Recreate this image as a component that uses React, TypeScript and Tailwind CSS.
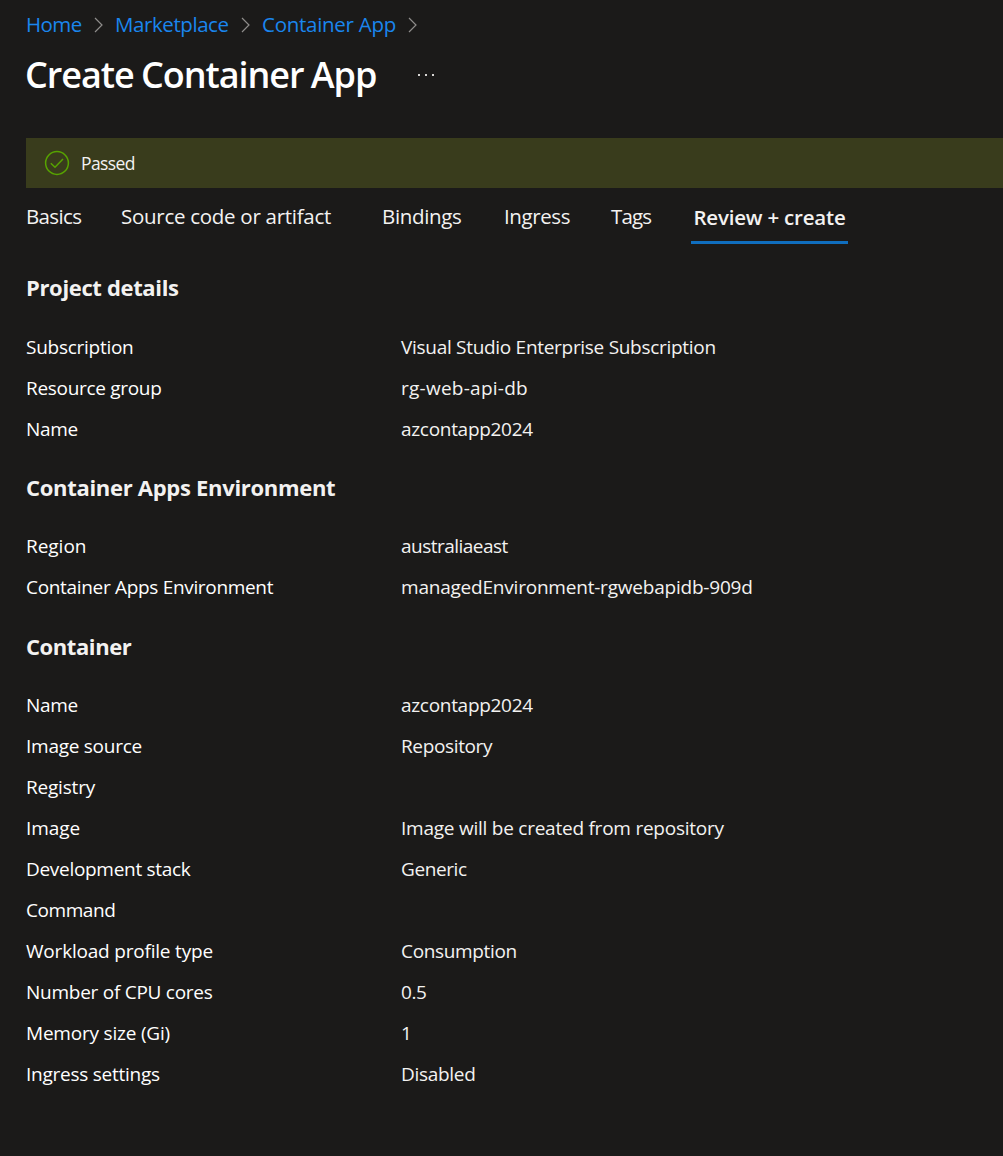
type Item = { text: string; cls: string };
type Row = { label: Item; value?: Item };
type Section = { title: Item; rows: Row[] };

const sections: Section[] = [
  {
    title: { text: "Project details", cls: "h-[76px] pb-px tracking-[-0.35px]" },
    rows: [
      {
        label: { text: "Subscription", cls: "tracking-[-0.27px]" },
        value: { text: "Visual Studio Enterprise Subscription", cls: "tracking-[-0.295px]" },
      },
      {
        label: { text: "Resource group", cls: "tracking-[-0.31px]" },
        value: { text: "rg-web-api-db", cls: "tracking-[0.25px]" },
      },
      {
        label: { text: "Name", cls: "tracking-[-0.35px]" },
        value: { text: "azcontapp2024", cls: "tracking-[-0.3px]" },
      },
    ],
  },
  {
    title: { text: "Container Apps Environment", cls: "h-[76px] pt-px tracking-[-0.3px]" },
    rows: [
      {
        label: { text: "Region", cls: "tracking-[-0.03px]" },
        value: { text: "australiaeast", cls: "tracking-[-0.53px]" },
      },
      {
        label: { text: "Container Apps Environment", cls: "tracking-[-0.32px]" },
        value: { text: "managedEnvironment-rgwebapidb-909d", cls: "tracking-[-0.21px]" },
      },
    ],
  },
  {
    title: { text: "Container", cls: "h-[77px] pt-px tracking-[-0.42px]" },
    rows: [
      {
        label: { text: "Name", cls: "tracking-[-0.35px]" },
        value: { text: "azcontapp2024", cls: "tracking-[-0.3px]" },
      },
      {
        label: { text: "Image source", cls: "tracking-[-0.26px]" },
        value: { text: "Repository", cls: "tracking-[-0.36px]" },
      },
      { label: { text: "Registry", cls: "tracking-[-0.2px]" } },
      {
        label: { text: "Image", cls: "tracking-[-0.05px]" },
        value: { text: "Image will be created from repository", cls: "tracking-[-0.24px]" },
      },
      {
        label: { text: "Development stack", cls: "tracking-[-0.3px]" },
        value: { text: "Generic", cls: "tracking-[-0.4px]" },
      },
      { label: { text: "Command", cls: "tracking-[-0.44px]" } },
      {
        label: { text: "Workload profile type", cls: "tracking-[-0.2px]" },
        value: { text: "Consumption", cls: "tracking-[-0.34px]" },
      },
      {
        label: { text: "Number of CPU cores", cls: "tracking-[-0.26px]" },
        value: { text: "0.5", cls: "tracking-[-0.4px]" },
      },
      {
        label: { text: "Memory size (Gi)", cls: "tracking-[-0.2px]" },
        value: { text: "1", cls: "tracking-normal" },
      },
      {
        label: { text: "Ingress settings", cls: "tracking-[-0.25px]" },
        value: { text: "Disabled", cls: "tracking-[-0.3px]" },
      },
    ],
  },
];

const crumbs: Item[] = [
  { text: "Home", cls: "w-[68px] tracking-[-0.6px]" },
  { text: "Marketplace", cls: "w-[127px] pl-px tracking-[-0.42px]" },
  { text: "Container App", cls: "w-[147px] pl-px tracking-[-0.27px]" },
];

const tabs: Item[] = [
  { text: "Basics", cls: "w-[95px] tracking-[-0.65px]" },
  { text: "Source code or artifact", cls: "w-[261px] tracking-[-0.28px]" },
  { text: "Bindings", cls: "w-[122px] tracking-[-0.35px]" },
  { text: "Ingress", cls: "w-[107px] tracking-[-0.4px]" },
  { text: "Tags", cls: "w-[80px] tracking-[-0.85px]" },
];

function Chevron() {
  return (
    <svg width="10" height="16" viewBox="0 0 10 16" fill="none" stroke="#8f8d8b" strokeWidth="1.2" className="mt-px">
      <path d="M1 1l7 7-7 7" />
    </svg>
  );
}

function PassedIcon() {
  return (
    <svg width="26" height="26" viewBox="0 0 26 26" fill="none" stroke="#57a300" strokeWidth="1.5">
      <circle cx="13" cy="13" r="11.4" />
      <path d="M6.8 13.2l4.2 4.1 8-8.3" />
    </svg>
  );
}

export default function App() {
  return (
    <div className="h-[1156px] w-full overflow-hidden bg-[#1b1a19] pl-[26px] font-['Open_Sans','Noto_Sans',sans-serif] text-[#f3f2f1]">
      <nav className="flex h-[49px] items-center text-[20.5px] whitespace-nowrap text-[#1a86ee]">
        {crumbs.map((c) => (
          <div key={c.text} className="flex items-center">
            <a className={c.cls}>{c.text}</a>
            <Chevron />
            <span className="w-[10px]" />
          </div>
        ))}
      </nav>

      <header className="flex h-[52px] items-center">
        <h1 className="-ml-px w-[393px] text-[36px] leading-[52px] font-semibold tracking-[-1.05px] [word-spacing:-1px] whitespace-nowrap text-white">
          Create Container App
        </h1>
        <button aria-label="More options" className="flex gap-[5px]">
          <span className="size-[2px] bg-[#d8d6d4]" />
          <span className="size-[2px] bg-[#d8d6d4]" />
          <span className="size-[2px] bg-[#d8d6d4]" />
        </button>
      </header>

      <div className="mt-[37px] flex h-[50px] items-center bg-[#393c1c] pl-[18px]">
        <PassedIcon />
        <span className="ml-[11px] text-[17.5px] tracking-[-0.6px]">Passed</span>
      </div>

      <div className="flex h-[62px] items-start text-[20.5px] leading-[56px] whitespace-nowrap">
        {tabs.map((t) => (
          <span key={t.text} className={t.cls}>
            {t.text}
          </span>
        ))}
        <span className="flex h-[56px] w-[157px] justify-center border-b-[3px] border-[#106ebe] leading-[58px] font-semibold tracking-[-0.2px]">
          Review + create
        </span>
      </div>

      {sections.map((s) => (
        <section key={s.title.text}>
          <h2 className={"flex items-center text-[22px] font-bold " + s.title.cls}>{s.title.text}</h2>
          {s.rows.map((r) => (
            <div key={r.label.text} className="flex h-[41px] items-start pt-0.5 text-[19px] leading-[39px] whitespace-nowrap">
              <span className={"w-[375px] text-white " + r.label.cls}>{r.label.text}</span>
              {r.value && <span className={r.value.cls}>{r.value.text}</span>}
            </div>
          ))}
        </section>
      ))}
    </div>
  );
}
